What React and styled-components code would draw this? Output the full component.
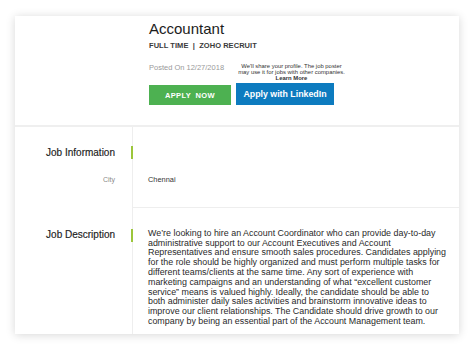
import React from "react";
import styled, { createGlobalStyle } from "styled-components";

const Global = createGlobalStyle`
  html, body { margin: 0; padding: 0; background: #ffffff; }
  body { font-family: "Liberation Sans", Arial, sans-serif; color: #333; }
  * { box-sizing: border-box; }
`;

const Page = styled.div`
  padding: 16px 15px 14px 15px;
`;

const Card = styled.div`
  width: 444px;
  background: #fff;
  box-shadow: 0 1px 9px rgba(0, 0, 0, 0.16);
`;

const Header = styled.header`
  padding: 4px 0 20px 134px;
  border-bottom: 2px solid #efefef;
`;

const Title = styled.h1`
  margin: 0;
  font-size: 15px;
  line-height: 18px;
  font-weight: 400;
  color: #1c1c1c;
`;

const Meta = styled.div`
  margin-top: 2.5px;
  font-size: 7.5px;
  line-height: 9px;
  font-weight: 700;
  color: #3a3a3a;
  letter-spacing: 0.05px;
`;

const ApplyGrid = styled.div`
  margin-top: 13px;
  display: grid;
  grid-template-columns: 82px auto;
  column-gap: 5px;
  align-items: end;
`;

const Posted = styled.div`
  align-self: start;
  font-size: 7.5px;
  line-height: 9px;
  color: #9a9a9a;
`;

const Note = styled.div`
  width: 111px;
  text-align: center;
  font-size: 5.9px;
  line-height: 6.3px;
  color: #333;
  margin-bottom: 2px;
  strong { font-weight: 700; }
`;

const Button = styled.button`
  border: 0;
  margin: 0;
  padding: 0;
  color: #fff;
  font-family: "Liberation Sans", Arial, sans-serif;
  font-weight: 700;
  cursor: pointer;
  display: flex;
  align-items: center;
  justify-content: center;
  width: ${(p) => p.$w}px;
  height: ${(p) => p.$h}px;
  background: ${(p) => p.$bg};
  font-size: ${(p) => p.$fs}px;
  letter-spacing: ${(p) => p.$ls || 0}px;
  word-spacing: ${(p) => p.$ws || 0}px;
`;

const Section = styled.section`
  display: grid;
  grid-template-columns: 117px 1fr;
`;

const LabelCell = styled.div`
  padding: ${(p) => p.$pt}px 17px 0 0;
  text-align: right;
`;

const ValueCell = styled.div`
  border-left: 1px solid #eeeeee;
  padding: ${(p) => p.$pt}px 4px ${(p) => p.$pb || 0}px 15px;
  display: flex;
  align-items: flex-start;
  border-bottom: ${(p) => (p.$divider ? "1px solid #eeeeee" : "0")};
`;

const Heading = styled.div`
  font-size: 10px;
  line-height: 13px;
  color: #202020;
  font-weight: 400;
  -webkit-text-stroke: 0.15px #202020;
`;

const FieldLabel = styled.div`
  font-size: 7px;
  line-height: 10px;
  color: #8a8a8a;
`;

const FieldValue = styled.div`
  font-size: 7.4px;
  line-height: 10px;
  color: #333;
`;

const Marker = styled.span`
  flex: none;
  display: block;
  width: 2px;
  height: 13px;
  margin: 0 15px 0 -17px;
  background: #9cc63b;
`;

const Paragraph = styled.p`
  margin: 0;
  width: 306px;
  font-size: 8.9px;
  line-height: 9.8px;
  color: #2a2a2a;
`;

const DESCRIPTION = [
  "We’re looking to hire an Account Coordinator who can provide day-to-day",
  "administrative support to our Account Executives and Account",
  "Representatives and ensure smooth sales procedures. Candidates applying",
  "for the role should be highly organized and must perform multiple tasks for",
  "different teams/clients at the same time. Any sort of experience with",
  "marketing campaigns and an understanding of what “excellent customer",
  "service” means is valued highly. Ideally, the candidate should be able to",
  "both administer daily sales activities and brainstorm innovative ideas to",
  "improve our client relationships. The Candidate should drive growth to our",
  "company by being an essential part of the Account Management team.",
];

export default function App() {
  return (
    <>
      <Global />
      <Page>
        <Card>
          <Header>
            <Title>Accountant</Title>
            <Meta>FULL TIME&nbsp; |&nbsp; ZOHO RECRUIT</Meta>
            <ApplyGrid>
              <Posted>Posted On 12/27/2018</Posted>
              <Note>
                We'll share your profile. The job poster
                <br />
                may use it for jobs with other companies.
                <br />
                <strong>Learn More</strong>
              </Note>
              <Button $w={82} $h={20} $bg="#4db151" $fs={7.5} $ls={0.4} $ws={2}>
                APPLY NOW
              </Button>
              <Button $w={98} $h={22} $bg="#0d7bbf" $fs={8.8}>
                Apply with LinkedIn
              </Button>
            </ApplyGrid>
          </Header>

          <Section>
            <LabelCell $pt={19}>
              <Heading>Job Information</Heading>
            </LabelCell>
            <ValueCell $pt={19}>
              <Marker />
            </ValueCell>
            <LabelCell $pt={16}>
              <FieldLabel>City</FieldLabel>
            </LabelCell>
            <ValueCell $pt={16} $pb={22} $divider>
              <FieldValue>Chennai</FieldValue>
            </ValueCell>
          </Section>

          <Section>
            <LabelCell $pt={20}>
              <Heading>Job Description</Heading>
            </LabelCell>
            <ValueCell $pt={20.5} $pb={7}>
              <Marker />
              <Paragraph>
                {DESCRIPTION.map((line, i) => (
                  <React.Fragment key={i}>
                    {line}
                    {i < DESCRIPTION.length - 1 && <br />}
                  </React.Fragment>
                ))}
              </Paragraph>
            </ValueCell>
          </Section>
        </Card>
      </Page>
    </>
  );
}
